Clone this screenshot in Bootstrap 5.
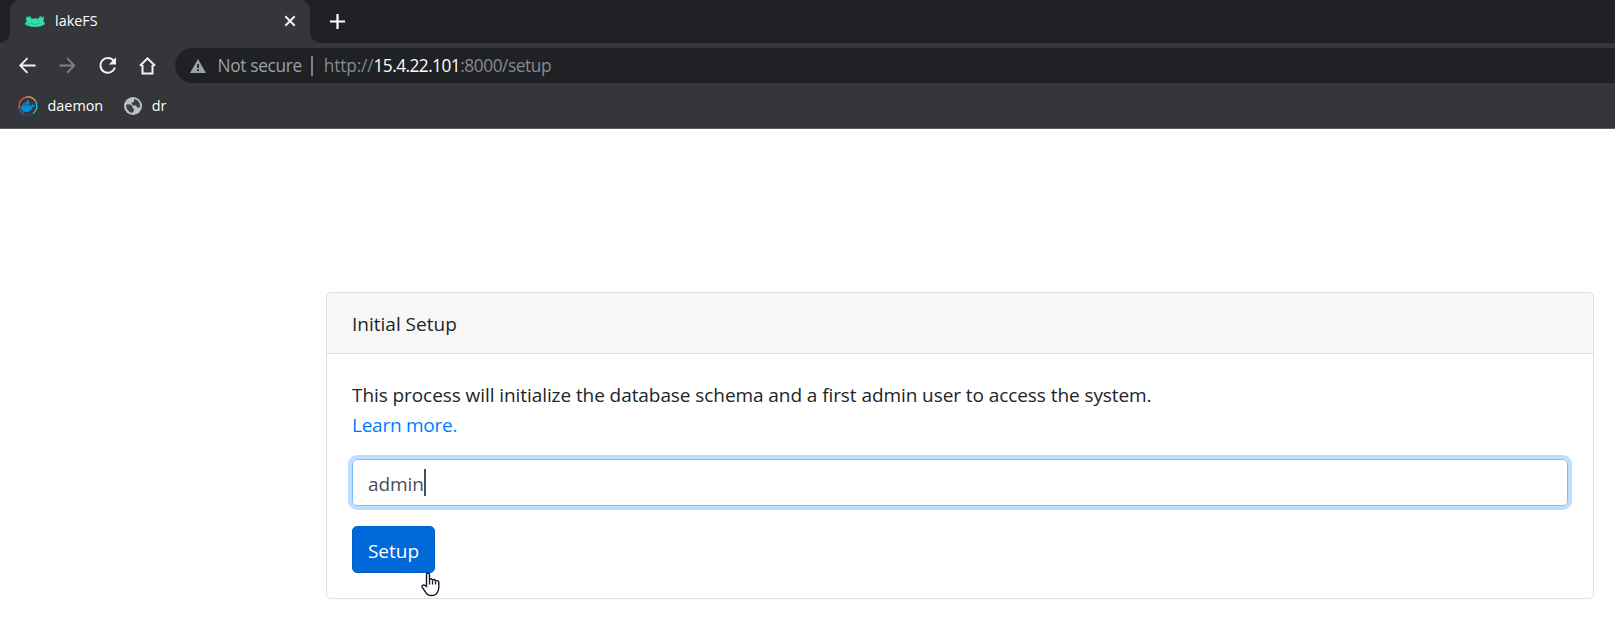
<!DOCTYPE html>
<html lang="en">
<head>
<meta charset="utf-8">
<title>lakeFS</title>
<link href="https://cdn.jsdelivr.net/npm/bootstrap@5.3.0/dist/css/bootstrap.min.css" rel="stylesheet">
<style>
  body { font-family: "Open Sans", "Noto Sans", sans-serif; font-size: 19px; line-height: 30px; color: #212529; background: #fff; height: 640px; overflow: hidden; }
  svg { display: block; flex: none; }
  .chrome { background: #35363a; height: 129px; border-bottom: 1px solid #5c5d60; color: #fff; white-space: nowrap; font-size: 14.4px; }
  .strip { height: 43px; }
  .strip-start { width: 10px; background: #202124; border-bottom-right-radius: 10px; }
  .strip-end { background: #202124; border-bottom-left-radius: 10px; padding-left: 20px; }
  .tab-slot { width: 300px; background: linear-gradient(#202124 50%, #35363a 50%); }
  .browser-tab { background: #35363a; border-radius: 10px 10px 0 0; padding: 0 14px 2px 15px; height: 43px; }
  .tab-title { margin-left: 10px; }
  .tools { height: 45px; padding-left: 18px; }
  .tools > svg { margin-right: 20px; }
  .address { background: #202124; height: 35px; border-radius: 18px 0 0 18px; margin-left: -3px; padding-left: 15px; color: #9aa0a6; font-size: 17.3px; }
  .security { margin-left: 11.500px; letter-spacing: -.33px; }
  .divider { width: 2px; height: 20px; background: #7d8084; margin: 0 11px 0 9px; }
  .url { color: #86898d; letter-spacing: -.42px; }
  .scheme { letter-spacing: -.15px; }
  .host { color: #fff; letter-spacing: -.55px; }
  .bookmarks { height: 36px; padding-left: 18px; }
  .bookmark { gap: 9.500px; margin-right: 21px; }
  .page { padding: 163px 21px 0 326px; }
  .card { border-radius: 5px; border-color: #dfdfdf; color: #212529; }
  .card-header { padding: 16px 25px 14px; background: #f7f7f7; border-bottom-color: #dfdfdf; }
  .card-body { padding: 26px 25px 25px; }
  .more { color: #007bff; text-decoration: none; letter-spacing: -.25px; }
  .field { height: 47px; border: 1px solid #80bdff; border-radius: 5px; box-shadow: 0 0 0 4px #bfdeff; padding: 0 15px; color: #495057; margin: 19px 0 20px; }
  .field-text { padding-top: 2px; letter-spacing: -.05px; }
  .caret { width: 2px; height: 27px; background: #495057; }
  .btn-setup, .btn-setup:hover { background: #0069d9; border: 1px solid #0062cc; color: #fff; width: 83px; height: 47px; border-radius: 5px; padding: 2px 0 0; font-size: 19px; line-height: 30px; }
  .pointer { left: 68px; top: 45px; }
  .intro { letter-spacing: -.075px; }
</style>
</head>
<body>
<header class="chrome">
  <div class="strip d-flex">
    <div class="strip-start"></div>
    <div class="tab-slot">
      <div class="browser-tab d-flex align-items-center">
        <svg width="20" height="12" viewBox="0 0 20 12"><path fill="#2ee0b0" d="M1.500 1 3 3V.8L4 2.500 5 .5 5.800 3Q7 4 8 3.500h4q1 .5 2.200-.5L15 .5l1 2 1-1.700V3l1.500-2 .5 3-.8 2.500L20 8l-.8 2Q15 12 10 12T.8 10L0 8l1.800-1.500L1 4Z"/><path d="M5.500 8Q10 11 14.500 8M2.500 9.500 4.500 8.500M17.500 9.500 15.500 8.500M6 5.500h1M13 5.500h1" stroke="#1ba583" stroke-width=".7" fill="none"/></svg>
        <span class="tab-title flex-grow-1">lakeFS</span>
        <svg width="12" height="12" viewBox="0 0 12 12"><path d="m1.300 1.300 9.400 9.400m0-9.400-9.400 9.400" stroke="#f1f3f4" stroke-width="2"/></svg>
      </div>
    </div>
    <div class="strip-end flex-grow-1 d-flex align-items-center">
      <svg width="15" height="15" viewBox="0 0 15 15"><path d="M7.500 0v15M0 7.500h15" stroke="#fff" stroke-width="2.200"/></svg>
    </div>
  </div>
  <div class="tools d-flex align-items-center">
    <svg width="20" height="20" viewBox="0 0 20 20"><path d="M17.500 9.500H3M9.500 2.200 2.200 9.500l7.300 7.300" fill="none" stroke="#f1f3f4" stroke-width="1.800"/></svg>
    <svg width="20" height="20" viewBox="0 0 20 20"><path d="M1.500 9.500H16M9 2.200l7.300 7.300L9 16.800" fill="none" stroke="#7f8184" stroke-width="1.800"/></svg>
    <svg width="20" height="20" viewBox="0 0 20 20"><path d="M15.600 4.700a7.400 7.400 0 1 0 1.300 6.800" fill="none" stroke="#f1f3f4" stroke-width="2"/><path d="M18 1.300V8.500h-7.200Z" fill="#f1f3f4"/></svg>
    <svg width="20" height="20" viewBox="0 0 20 20"><path d="M2 9.800 9.500 2.300 17 9.800M4.500 9v8.500h10V9" fill="none" stroke="#f1f3f4" stroke-width="2"/></svg>
    <div class="address flex-grow-1 d-flex align-items-center">
      <svg width="16" height="14" viewBox="0 0 16 14"><path d="M8 0 16 14H0Z" fill="#9aa0a6"/><path d="M8 5v4m0 1.300V12" stroke="#202124" stroke-width="1.700"/></svg>
      <span class="security">Not secure</span>
      <span class="divider"></span>
      <span class="url"><span class="scheme">http://</span><span class="host">15.4.22.101</span>:8000/setup</span>
    </div>
  </div>
  <div class="bookmarks d-flex align-items-center">
    <div class="bookmark d-flex align-items-center">
      <svg width="20" height="20" viewBox="0 0 20 20"><g fill="none" stroke-width="1.300"><path d="M1.300 12A9 9 0 0 1 8 1.200" stroke="#ef5350"/><path d="M8 1.200a9 9 0 0 1 9.500 4" stroke="#f9a34b"/><path d="M17.500 5.200A9 9 0 0 1 15 17.400" stroke="#2cc5cf"/><path d="M15 17.400a9 9 0 0 1-9 .8" stroke="#214b75"/><path d="M6 18.200A9 9 0 0 1 1.300 12" stroke="#7047a8"/></g><path fill="#078bd3" d="M2.500 10h2V7.500H7V6h2V4.500h2.300V9.800h2.200q.7-1 .2-2.600 1.700.8 1.700 2 1.400-.3 2 .3-.6 1.300-2.400 1.300Q13.300 16 8 16 3 16 2.500 10Z"/><path d="M5 8.800h6.500M6.700 7.500v2.500M9 6v4" stroke="#1b5077" stroke-width=".5"/></svg>
      <span>daemon</span>
    </div>
    <div class="bookmark d-flex align-items-center">
      <svg width="18" height="18" viewBox="0 0 18 18"><circle cx="9" cy="9" r="9" fill="#bdc1c6"/><path d="M2 7.500h4.500l2 2v2H10v2.200L8 16Q2.500 15 2 7.500ZM10 2q4 .5 5.800 4.500.4 2-.1 4.300l-2.700-.3-.8-2H9L7.500 6.800 8 5.200h2Z" fill="#3d3f43"/></svg>
      <span>dr</span>
    </div>
  </div>
</header>
<main class="page">
  <div class="card">
    <div class="card-header">Initial Setup</div>
    <div class="card-body">
      <div class="intro">This process will initialize the database schema and a first admin user to access the system.</div>
      <div><a class="more" href="#">Learn more.</a></div>
      <div class="field d-flex align-items-center"><span class="field-text">admin</span><span class="caret"></span></div>
      <button class="btn btn-setup position-relative d-block" type="button">Setup
        <svg class="pointer position-absolute" width="20" height="25" viewBox="0 0 20 25"><path d="M5.500 14.500V2.500Q5.500 1 7 1t1.500 1.500V8q0-1.200 1.300-1.200T11.500 8v.6q0-1.100 1.400-1.100T14.500 9v.6q.2-1 1.500-1 1.800 0 1.800 1.800V15q0 3.500-1.500 5.500Q15 23.500 10.500 23.500T4.500 20L1.300 15.300Q.6 14 1.600 13.300t2.200 0Z" fill="#fff" stroke="#15152a" stroke-width="1.400"/><path d="M8.500 8v4.500m3-4v4m3-3v3" stroke="#15152a" stroke-width="1.300"/></svg>
      </button>
    </div>
  </div>
</main>
<script src="https://cdn.jsdelivr.net/npm/bootstrap@5.3.0/dist/js/bootstrap.bundle.min.js"></script>
</body>
</html>
